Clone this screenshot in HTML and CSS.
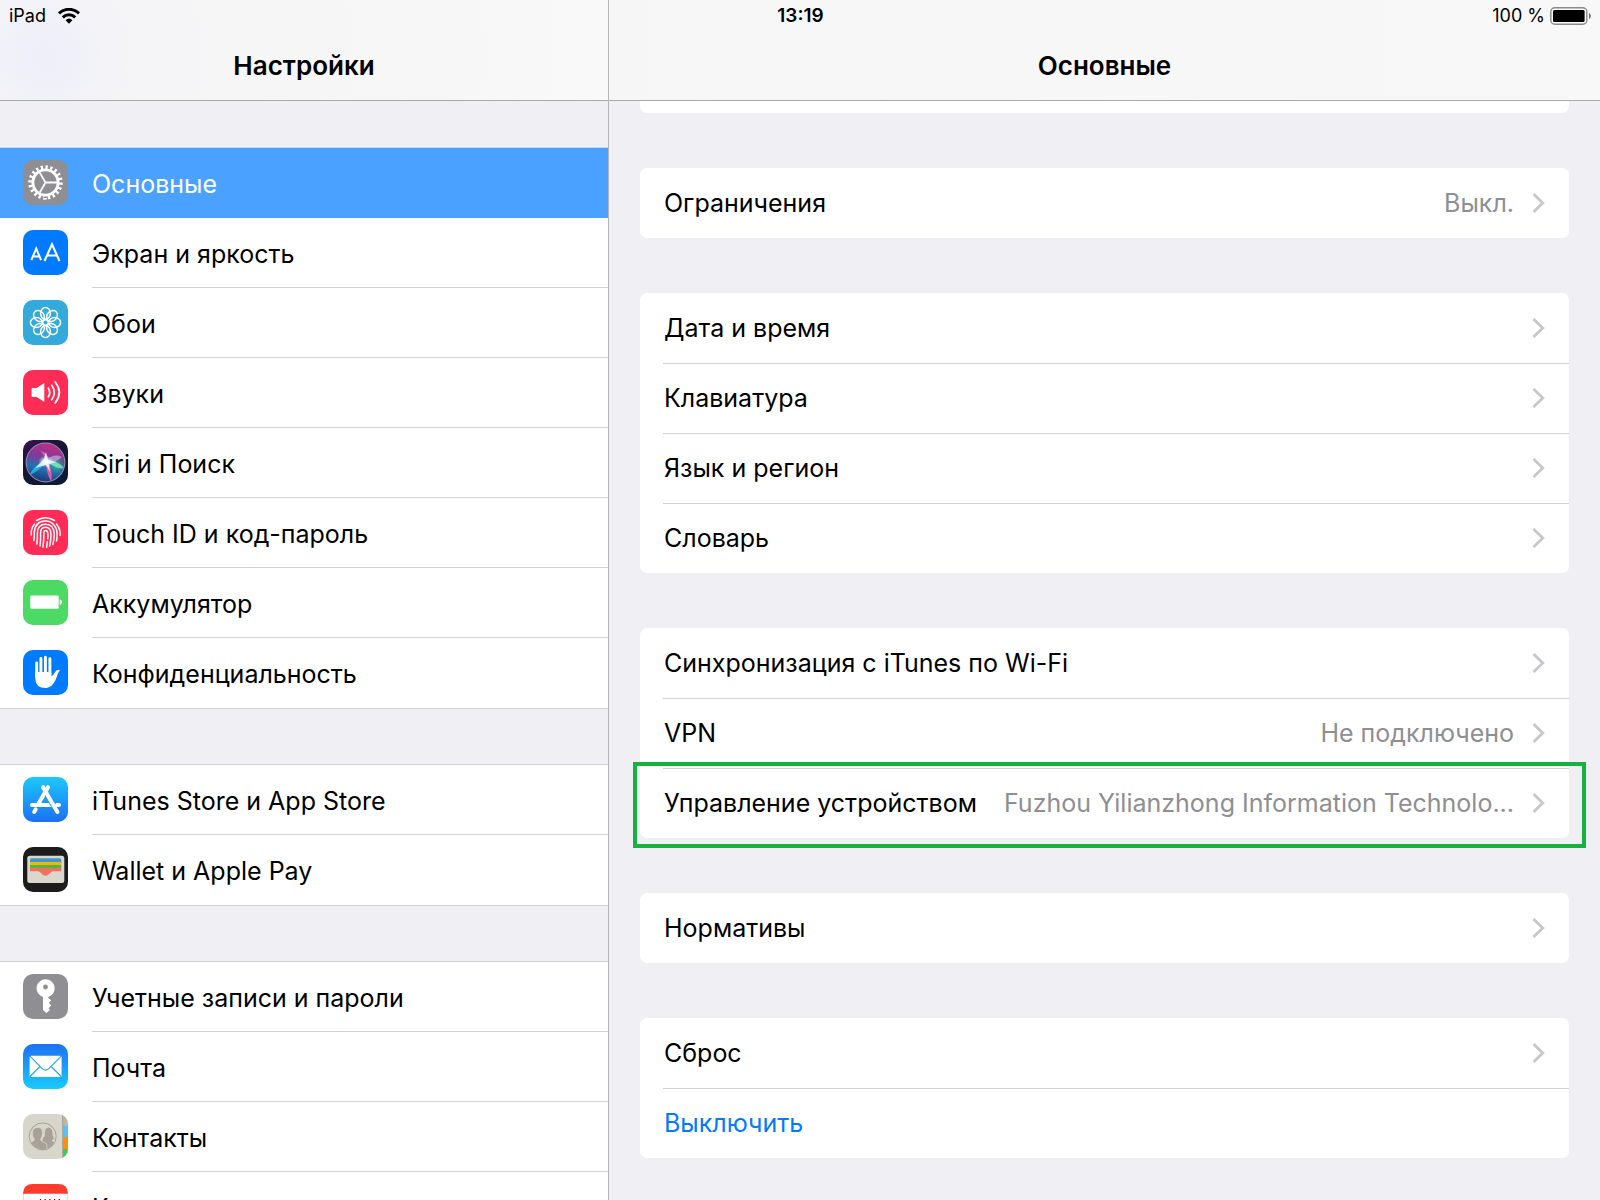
FILE: index.html
```html
<!DOCTYPE html>
<html lang="ru">
<head>
<meta charset="utf-8">
<title>Настройки</title>
<meta name="viewport" content="width=device-width, initial-scale=1">
<link rel="stylesheet" href="styles.css">
</head>
<body>
<svg class="defs" width="0" height="0" aria-hidden="true">
  <defs>
    <symbol id="chevron" viewBox="0 0 13 22"><path d="M1.5 2 10.8 11 1.5 20" fill="none" stroke="#c7c7cc" stroke-width="2.8"/></symbol>
    <linearGradient id="store" x2="0" y2="1"><stop stop-color="#1cc8fb"/><stop offset="1" stop-color="#1d70f2"/></linearGradient>
    <linearGradient id="mail" x2="0" y2="1"><stop stop-color="#1d70f2"/><stop offset="1" stop-color="#19cbfc"/></linearGradient>
    <linearGradient id="siri-bg" x2=".6" y2="1"><stop stop-color="#3b1152"/><stop offset=".5" stop-color="#171630"/><stop offset="1" stop-color="#0b1c33"/></linearGradient>
    <linearGradient id="siri-orb" x1=".6" x2=".35" y2="1"><stop stop-color="#c32a86"/><stop offset=".4" stop-color="#7b3c98"/><stop offset=".65" stop-color="#2272b6"/><stop offset="1" stop-color="#1b3672"/></linearGradient>
    <radialGradient id="siri-green"><stop stop-color="#2fd6a0"/><stop offset="1" stop-color="#14806f" stop-opacity="0"/></radialGradient>
    <radialGradient id="siri-glow"><stop stop-color="#fff"/><stop offset=".4" stop-color="#c8f2ff" stop-opacity=".8"/><stop offset="1" stop-color="#8fd8ff" stop-opacity="0"/></radialGradient>
  </defs>
</svg>
<div class="screen">
  <div class="status">
    <span class="carrier">iPad
      <svg width="22" height="16" viewBox="0 0 22 16" aria-hidden="true"><g fill="none" stroke="#000" stroke-width="3"><path d="M1 5.3a14.5 14.5 0 0 1 20 0"/><path d="M4.8 9.3a9 9 0 0 1 12.4 0"/></g><path d="M7.6 12.2a5 5 0 0 1 6.8 0L11 15.7z"/></svg>
    </span>
    <time>13:19</time>
    <span class="power">100 %
      <svg width="42" height="18" viewBox="0 0 42 18" aria-hidden="true"><rect x=".8" y=".8" width="36" height="16.4" rx="4" fill="none" stroke="#8a8a8a" stroke-width="1.4"/><rect x="3" y="3" width="31.6" height="12" rx="1.5"/><path d="M39 6c2.6.8 2.6 5.2 0 6z" fill="#777"/></svg>
    </span>
  </div>

  <nav class="pane sidebar" aria-label="Настройки">
    <header class="bar bar-side"><h1>Настройки</h1></header>
    <ul class="menu">
      <li><a class="item active" href="#general" aria-current="page">
        <svg class="icon" viewBox="0 0 45 45"><rect width="45" height="45" rx="10" fill="#8e8e93"/><g fill="none" stroke="#fff"><circle cx="22.5" cy="22.5" r="12.6" stroke-width="2.9"/><circle cx="22.5" cy="22.5" r="15.4" stroke-width="3.6" pathLength="80" stroke-dasharray="1.9 2.1"/><path stroke-width="1.8" d="M22.5 22.5h12M22.5 22.5l-6-10.4M22.5 22.5l-6 10.4"/></g></svg>
        <span>Основные</span></a></li>
      <li><a class="item" href="#display">
        <svg class="icon" viewBox="0 0 45 45"><rect width="45" height="45" rx="10" fill="#007aff"/><g fill="none" stroke="#fff"><path stroke-width="2" d="M8.3 30.2 13.2 18.6l4.9 11.6M10 26.5h6.5"/><path stroke-width="2.1" d="M21.5 31 29 14.3 36.5 31M24 25.5h10"/></g></svg>
        <span>Экран и яркость</span></a></li>
      <li><a class="item" href="#wallpaper">
        <svg class="icon" viewBox="0 0 45 45"><rect width="45" height="45" rx="10" fill="#34aadc"/><g fill="none" stroke="#fff" stroke-width="1.5" transform="translate(22.5 22.5)"><g id="petals"><ellipse cy="-9.2" rx="4.9" ry="5.900"/><ellipse cy="9.2" rx="4.9" ry="5.900"/><ellipse cx="9.2" rx="5.900" ry="4.9"/><ellipse cx="-9.2" rx="5.900" ry="4.9"/></g><use href="#petals" transform="rotate(45)"/><circle r="2.8"/></g></svg>
        <span>Обои</span></a></li>
      <li><a class="item" href="#sounds">
        <svg class="icon" viewBox="0 0 45 45"><rect width="45" height="45" rx="10" fill="#ff2d55"/><path fill="#fff" d="M9.5 18h4.2l7.6-5v19l-7.6-5H9.5q-.9 0-.9-.9v-7.200q0-.9.9-.9z"/><g fill="none" stroke="#fff" stroke-width="1.7" stroke-linecap="round"><path d="M25.300 18.200q2.800 4.300 0 8.600M28.700 15.200q5.200 7.300 0 14.600M32.200 12q8.200 10.500 0 21"/></g></svg>
        <span>Звуки</span></a></li>
      <li><a class="item" href="#siri">
        <svg class="icon" viewBox="0 0 45 45"><rect width="45" height="45" rx="10" fill="url(#siri-bg)"/><circle cx="22.500" cy="22.500" r="19" fill="url(#siri-orb)"/><ellipse cx="33" cy="25" rx="10" ry="10" fill="url(#siri-green)"/><path fill="#24c6e8" opacity=".75" d="M23 21C15 24 8 29 7 35c6-3 12-8 16-12z"/><path fill="#ec5da8" opacity=".9" d="M22 22c2 5 2 13 6 19 2-6 0-13-3-19z"/><path fill="#7de8c4" opacity=".8" d="M23 22c5 2 12 8 18 6-3-5-11-7-17-8z"/><path fill="#e77fbf" opacity=".7" d="M22 22c0-5-2-9-5-11 7 1 9 6 8 11z"/><path fill="#d8b5ea" opacity=".6" d="M23 21c4-5 10-7 16-4-4 4-9 5-15 6z"/><ellipse cx="23" cy="21.500" rx="8" ry="6" fill="url(#siri-glow)"/><path fill="#fff" d="m12 28 9-9 2-7 2 8 9 2-8 2 1 8-4-7z" opacity=".75"/><circle cx="22.500" cy="22.500" r="19.300" fill="none" stroke="#8e86ac" stroke-width="1.200"/></svg>
        <span>Siri и Поиск</span></a></li>
      <li><a class="item" href="#touchid">
        <svg class="icon" viewBox="0 0 45 45"><rect width="45" height="45" rx="10" fill="#ff2d55"/><g fill="none" stroke="#fff" stroke-width="1.500" stroke-linecap="round"><path d="M13.500 10.500q9-5.500 18 0M8.300 25V21.500q.4-4.200 3.200-7.500M33.500 14q3.200 4 3.600 8v3.500"/><path d="M10.800 30.500q.7-3.500.5-8Q12 11 22.500 11q5.500 0 9 4.600 2.700 3.400 2.700 9 0 3.500-.7 6.500"/><path d="M13.800 34q.8-5 .6-11 .2-8.800 8.100-8.800 8.500 0 8.700 10 0 6-1.400 10.300"/><path d="M17 36q.8-6 .6-13 0-5.700 4.900-5.700 5.300 0 5.500 7 .1 6.500-1.500 12"/><path d="M20 37q.9-7 .8-14 .1-2.600 1.800-2.600 2.200 0 2.300 3.700.1 2.500-.1 4.800M24.400 31.500l-.8 5.900"/></g></svg>
        <span>Touch ID и код-пароль</span></a></li>
      <li><a class="item" href="#battery">
        <svg class="icon" viewBox="0 0 45 45"><rect width="45" height="45" rx="10" fill="#4cd964"/><rect x="7.300" y="15.500" width="28.400" height="13.200" rx="1" fill="#fff"/><path fill="#fff" d="M36.700 19.200q2.500 1 2.500 2.900t-2.500 2.900z"/></svg>
        <span>Аккумулятор</span></a></li>
      <li><a class="item" href="#privacy">
        <svg class="icon" viewBox="0 0 45 45"><rect width="45" height="45" rx="10" fill="#007aff"/><g stroke="#fff" stroke-width="2.900" stroke-linecap="round"><path d="M13.700 13v14M17.900 8.500v16M22.400 7.300v16M26.900 8.800v16"/></g><path fill="#fff" d="M12.300 22h16v4q2-.3 3.500-3.500 1.800-3.500 5-2.400-.1 1.200-2 3.400Q31 37.900 22.500 38q-9.700 0-10.200-9z"/></svg>
        <span>Конфиденциальность</span></a></li>
    </ul>
    <ul class="menu">
      <li><a class="item" href="#store">
        <svg class="icon" viewBox="0 0 45 45"><rect width="45" height="45" rx="10" fill="url(#store)"/><g stroke="#fff" stroke-width="4" stroke-linecap="round"><path d="M9 28h27M25 10.200 15.300 27M12.700 32.300l-1.500 2.600"/><path stroke="#1d9bf7" stroke-width="5.600" stroke-linecap="butt" d="m24 17 6.500 11.500"/><path d="m20 10.200 14.400 24.700"/></g></svg>
        <span>iTunes Store и App Store</span></a></li>
      <li><a class="item" href="#wallet">
        <svg class="icon" viewBox="0 0 45 45"><rect width="45" height="45" rx="10" fill="#1c1c1c"/><rect x="4.300" y="8.700" width="37" height="27.300" rx="2.500" fill="#dad8cc"/><path fill="#4297c9" d="M7 16v-3q0-1.700 1.700-1.700h27.900q1.700 0 1.700 1.700v3z"/><path fill="#fcb10c" d="M7 15h31.300v3.500H7z"/><path fill="#4fb844" d="M7 18h31.300v3.400H7z"/><path fill="#f2705f" d="M7 21h31.300v3.200h-7.800q-2.300 0-3.500 1.900-1.900 2.700-4.500 2.700T18 26.100q-1.200-1.900-3.500-1.900H7z"/></svg>
        <span>Wallet и Apple Pay</span></a></li>
    </ul>
    <ul class="menu">
      <li><a class="item" href="#accounts">
        <svg class="icon" viewBox="0 0 45 45"><rect width="45" height="45" rx="10" fill="#8e8e93"/><path fill="#fff" d="M20 22.900A9 9 0 1 1 25.200 22.900V24l3 2.300-2.400 2.700 2.400 2.600-2.500 2.600 1.300 1.700-3.600 3.200L20 36z"/><circle cx="22.500" cy="13" r="2.400" fill="#8e8e93"/></svg>
        <span>Учетные записи и пароли</span></a></li>
      <li><a class="item" href="#mail">
        <svg class="icon" viewBox="0 0 45 45"><rect width="45" height="45" rx="10" fill="url(#mail)"/><rect x="6.600" y="11.700" width="32" height="21.200" rx="1.500" fill="#fff"/><path fill="none" stroke="#269ff8" stroke-width="1.100" d="m7 12.200 12.500 12.600q3 2.600 6 0L38.200 12.200M7 32.500l10-10M38.200 32.500l-10-10"/></svg>
        <span>Почта</span></a></li>
      <li><a class="item" href="#contacts">
        <svg class="icon" viewBox="0 0 45 45"><clipPath id="tile"><rect width="45" height="45" rx="10"/></clipPath><g clip-path="url(#tile)"><path fill="#d8d5cb" d="M0 0h45v45H0z"/><path fill="#b9b5aa" d="M39.500 0H45v12h-5.500z"/><path fill="#5ac0f8" d="M40 12h5v11h-5z"/><path fill="#fb920b" d="M40 23h5v12h-5z"/><path fill="#43c559" d="M40 35h5v10h-5z"/><path fill="#9d998f" d="M39.300 0h.8v45h-.8z"/></g><clipPath id="disc"><circle cx="19.700" cy="22.400" r="13"/></clipPath><circle cx="19.700" cy="22.400" r="13.500" fill="none" stroke="#a7a197" stroke-width="1"/><g clip-path="url(#disc)" fill="#a7a197"><path d="M20 24q2-1 2-3-1-7 3.500-7.500Q30 14 29.500 21l1.500 4q-2 1-2.500 2L33 29v8H17z"/><path stroke="#d8d5cb" stroke-width=".8" d="M5 37v-7l6-3.500q1-.7 0-2-1.500-1.500-1.500-6 0-4.800 5-5t5 5q0 4.500-1.600 6-1 1.300 0 2l6 3.500v7z"/></g></svg>
        <span>Контакты</span></a></li>
      <li><a class="item" href="#calendar">
        <svg class="icon" viewBox="0 0 45 45"><rect x=".5" y=".5" width="44" height="44" rx="10" fill="#fff" stroke="#ddd"/><path fill="#ff3b30" d="M0 9.700Q0 0 10 0h25q10 0 10 9.700z"/><path stroke="#222" stroke-width="1.200" d="M17.500 15v5M22.200 15v5M26.900 15v5M31.600 15v5M36.300 15v5"/></svg>
        <span>Календарь</span></a></li>
    </ul>
  </nav>

  <main class="pane detail">
    <header class="bar bar-main"><h2>Основные</h2></header>
    <div class="cards">
      <div class="card tail"></div>
      <ul class="card">
        <li><a class="row" href="#restrictions"><span>Ограничения</span><span class="value">Выкл.</span><svg class="chev"><use href="#chevron"/></svg></a></li>
      </ul>
      <ul class="card">
        <li><a class="row" href="#date"><span>Дата и время</span><svg class="chev"><use href="#chevron"/></svg></a></li>
        <li><a class="row" href="#keyboard"><span>Клавиатура</span><svg class="chev"><use href="#chevron"/></svg></a></li>
        <li><a class="row" href="#language"><span>Язык и регион</span><svg class="chev"><use href="#chevron"/></svg></a></li>
        <li><a class="row" href="#dictionary"><span>Словарь</span><svg class="chev"><use href="#chevron"/></svg></a></li>
      </ul>
      <ul class="card">
        <li><a class="row" href="#sync"><span>Синхронизация с iTunes по Wi-Fi</span><svg class="chev"><use href="#chevron"/></svg></a></li>
        <li><a class="row" href="#vpn"><span>VPN</span><span class="value">Не подключено</span><svg class="chev"><use href="#chevron"/></svg></a></li>
        <li class="marked"><a class="row" href="#management"><span>Управление устройством</span><span class="value">Fuzhou Yilianzhong Information Technolo...</span><svg class="chev"><use href="#chevron"/></svg></a></li>
      </ul>
      <ul class="card">
        <li><a class="row" href="#legal"><span>Нормативы</span><svg class="chev"><use href="#chevron"/></svg></a></li>
      </ul>
      <ul class="card">
        <li><a class="row" href="#reset"><span>Сброс</span><svg class="chev"><use href="#chevron"/></svg></a></li>
        <li><button class="row" type="button">Выключить</button></li>
      </ul>
    </div>
  </main>
</div>
</body>
</html>
```

FILE: styles.css
```css
* { box-sizing: border-box; }

body {
  margin: 0;
  background: #efeff4;
  color: #000;
  font: 400 25px/32px Inter, "Liberation Sans", sans-serif;
}

ul { list-style: none; margin: 0; padding: 0; }
h1, h2 { margin: 0; font-size: 26px; font-weight: 600; line-height: 32px; }
a { color: inherit; text-decoration: none; }
.defs { position: absolute; }

.screen {
  display: grid;
  grid-template-columns: 38% 1fr;
  grid-template-rows: 100vh;
}

/* Status bar shares the top of both panes */
.status {
  grid-area: 1 / 1 / 2 / 3;
  z-index: 1;
  align-self: start;
  display: grid;
  grid-template-columns: 1fr auto 1fr;
  align-items: center;
  height: 32px;
  padding: 0 8px 0 9px;
  font-size: 18px;
  line-height: 24px;
}
.status time { font-size: 19px; font-weight: 600; }
.status span { display: flex; align-items: center; }
.carrier { gap: 12px; }
.power { justify-content: flex-end; gap: 5px; }

.pane { grid-row: 1; min-width: 0; overflow: hidden; }
.sidebar { grid-column: 1; }
.detail { grid-column: 2; border-left: 1px solid #b4b4b9; }

.bar {
  display: flex;
  justify-content: center;
  align-items: flex-end;
  height: 101px;
  padding-bottom: 18px;
  border-bottom: 1px solid #a9a9ad;
}
.bar-side { background: radial-gradient(circle at 45px 56px, #eeeefa, #f5f5f7 90px, #f6f6f6 300px, #f9f9f9); }
.bar-main { background: linear-gradient(90deg, #f6f6f6, #f8f8f8); }

.menu {
  margin-bottom: 55px;
  background: #fff;
  border: solid #d0d0d5;
  border-width: 1px 0;
}
.bar + .menu { margin-top: 46px; border-top-color: #c3d9f2; }
.item {
  display: flex;
  align-items: center;
  gap: 24px;
  height: 70px;
  padding: 0 0 2px 23px;
}
.item span {
  flex: 1;
  height: 70px;
  padding-top: 20px;
  border-bottom: 1px solid #d2d2d6;
}
.item span { align-self: flex-start; }
.menu li:last-child span, .active span { border-color: transparent; }
.active { background: #4ba1ff; color: #fff; }
.icon { width: 45px; height: 45px; flex: none; }

.cards { padding: 0 31px; }
.card { margin-bottom: 55px; background: #fff; border-radius: 7px; }
.tail { height: 12px; border-radius: 0 0 7px 7px; }
.card li { position: relative; padding-left: 23px; }
.card li + li .row { border-top: 1px solid #d2d2d6; }
.row {
  display: flex;
  align-items: center;
  width: 100%;
  height: 70px;
  padding: 0 24px 1px 1px;
  white-space: nowrap;
}
.value {
  flex: 1;
  min-width: 0;
  padding-left: 20px;
  overflow: hidden;
  text-overflow: ellipsis;
  text-align: right;
  color: #8e8e93;
}
.chev { width: 13px; height: 22px; flex: none; margin-left: auto; }
.value + .chev { margin-left: 18px; }
button.row {
  border: 0;
  background: none;
  color: #007aff;
  font: inherit;
  text-align: left;
  cursor: pointer;
}

/* Frame around the highlighted row */
.marked::after {
  content: "";
  position: absolute;
  inset: -6px -17px -10px -7px;
  border: 4px solid #17b142;
  pointer-events: none;
}
```
